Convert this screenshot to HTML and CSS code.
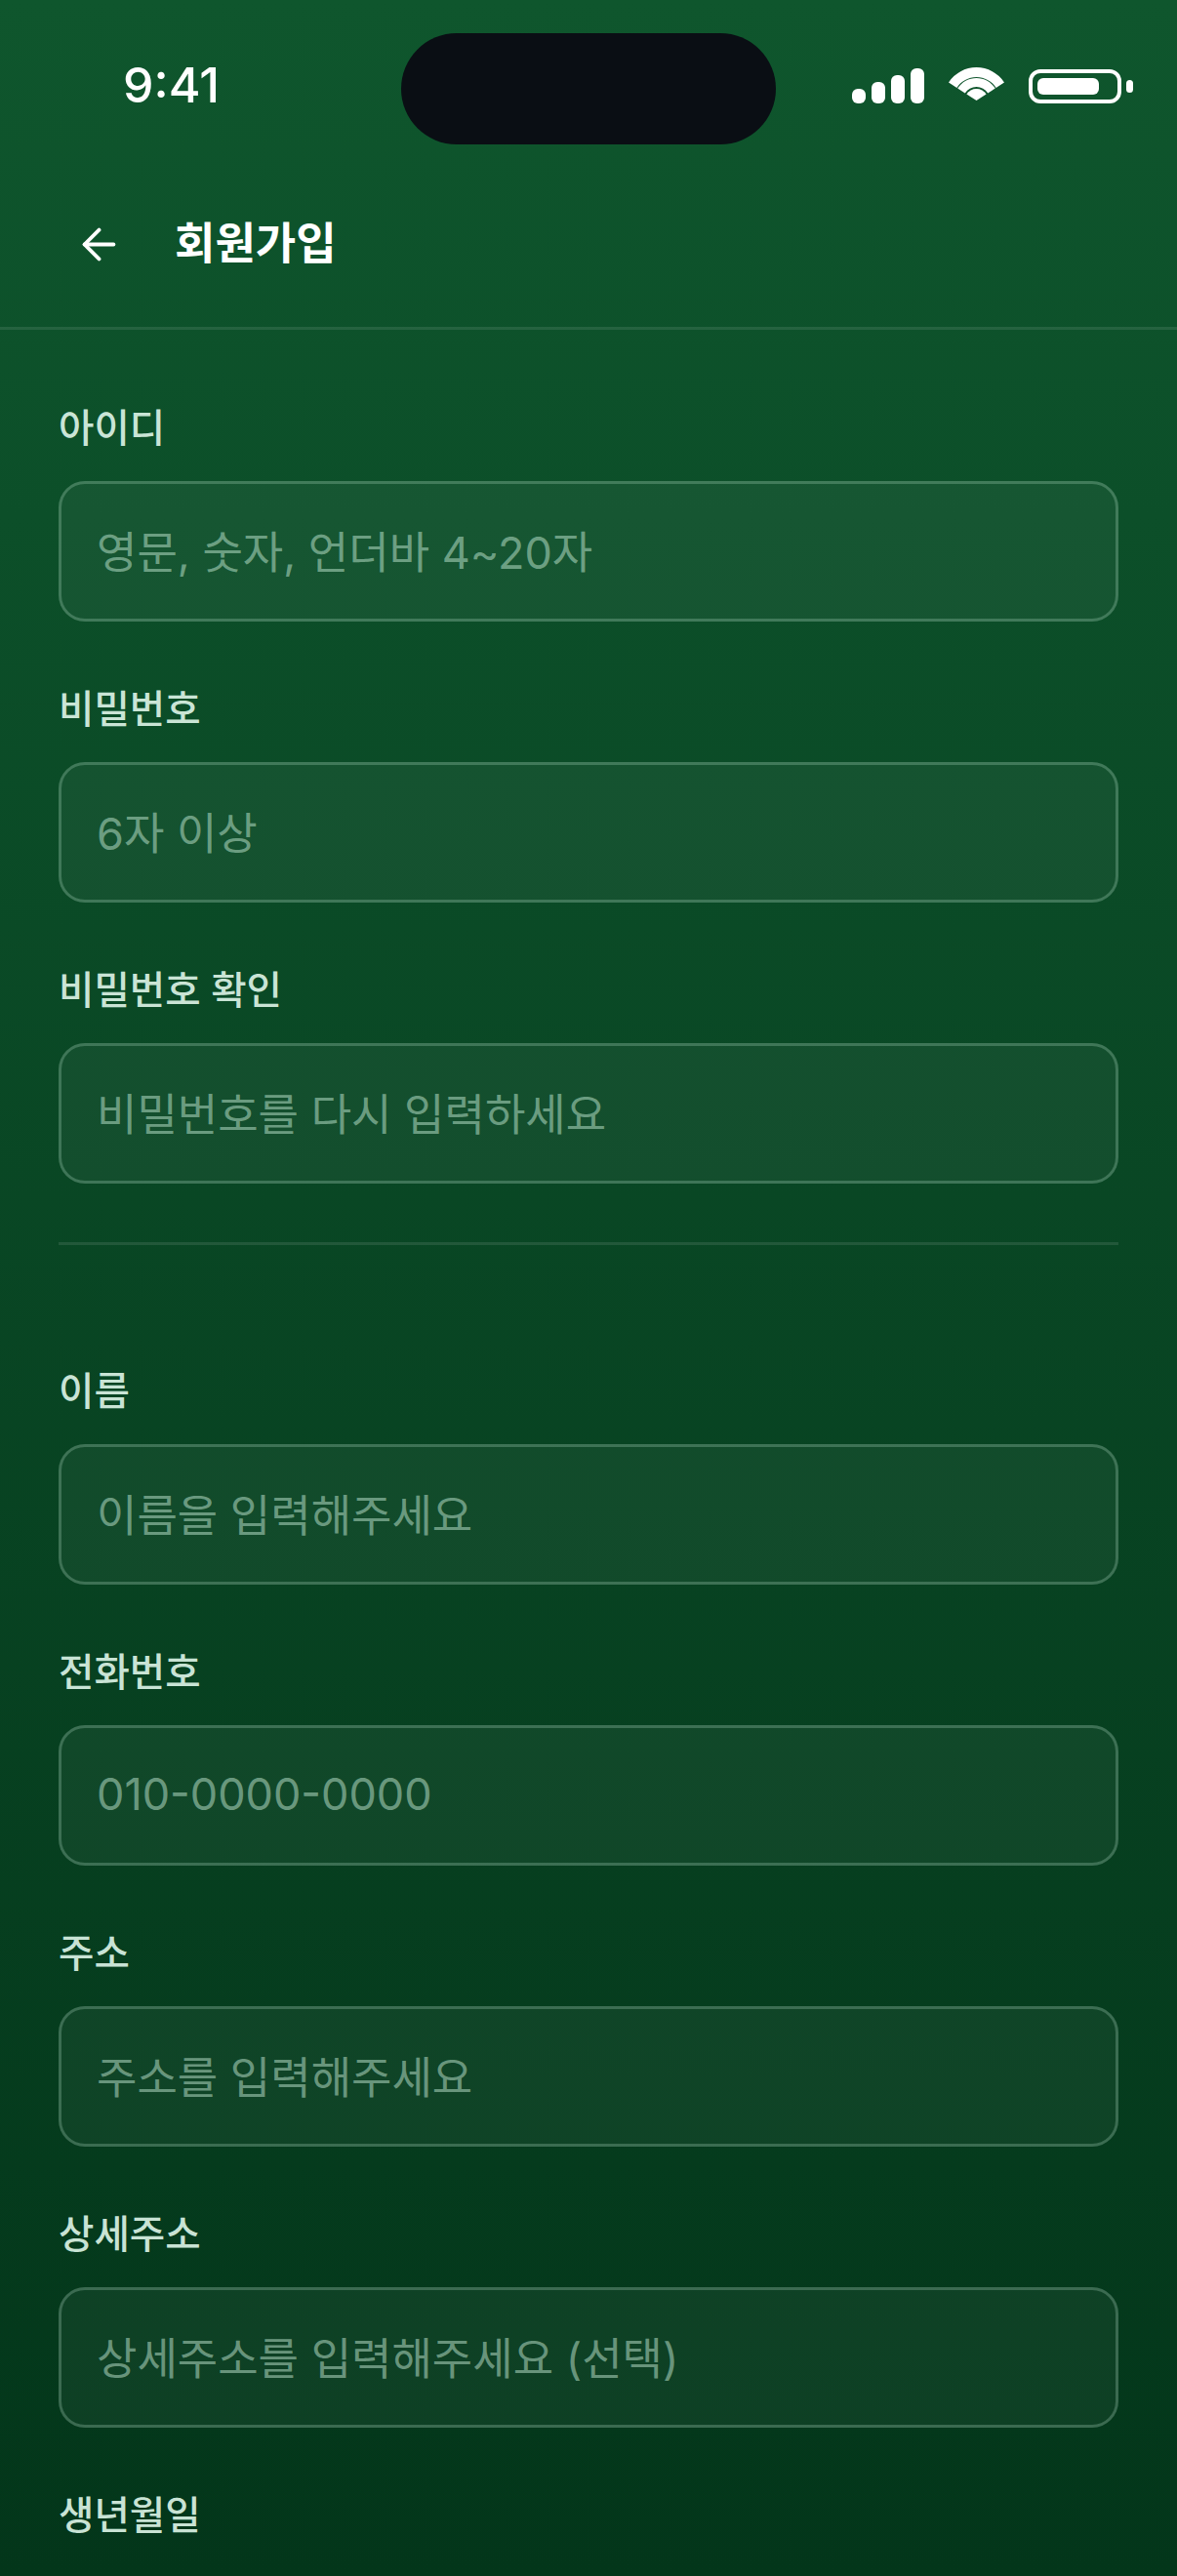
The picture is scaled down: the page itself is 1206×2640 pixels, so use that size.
FILE: index.html
```html
<!DOCTYPE html>
<html lang="ko">
<head>
<meta charset="utf-8">
<title>회원가입</title>
<link rel="stylesheet" href="styles.css">
</head>
<body>
<div class="screen">
  <div class="status">
    <span class="time">9:41</span>
    <div class="island"></div>
    <div class="status-icons">
      <svg class="signal" width="74" height="36" viewBox="0 0 74 36" fill="#fff"><rect x="0" y="21" width="14" height="15" rx="6"/><rect x="20" y="14" width="14" height="22" rx="6"/><rect x="40" y="7" width="14" height="29" rx="6"/><rect x="60" y="0" width="14" height="36" rx="6"/></svg>
      <svg class="wifi" width="57" height="34" viewBox="0 0 57 34" fill="#fff"><path d="M0 15.5A34 34 0 0 1 57 15.5L48.6 20.9A24 24 0 0 0 8.4 20.9Z"/><path d="M9.2 21.5A23 23 0 0 1 47.8 21.5L40.2 26.4A14 14 0 0 0 16.8 26.4Z"/><path d="M18.4 27.5A12 12 0 0 1 38.6 27.5L28.5 34Z"/></svg>
      <svg class="battery" width="107" height="35" viewBox="0 0 107 35" fill="#fff"><rect x="2" y="2" width="91" height="31" rx="10" fill="none" stroke="#fff" stroke-width="4"/><rect x="9" y="9" width="63" height="17" rx="6"/><rect x="100" y="11" width="7" height="13" rx="3.5"/></svg>
    </div>
  </div>
  <header class="topbar">
    <svg class="back" width="51" height="51" viewBox="0 0 24 24" fill="none" stroke="#fff" stroke-width="1.8" stroke-linecap="round" stroke-linejoin="round"><path d="m12 19-7-7 7-7"/><path d="M19 12H5"/></svg>
    <h1 class="title">회원가입</h1>
  </header>
  <main class="form">
    <section class="group">
      <div class="field"><div class="label">아이디</div><div class="input">영문, 숫자, 언더바 4~20자</div></div>
      <div class="field"><div class="label">비밀번호</div><div class="input">6자 이상</div></div>
      <div class="field"><div class="label">비밀번호 확인</div><div class="input">비밀번호를 다시 입력하세요</div></div>
    </section>
    <hr class="divider">
    <section class="group">
      <div class="field"><div class="label">이름</div><div class="input">이름을 입력해주세요</div></div>
      <div class="field"><div class="label">전화번호</div><div class="input">010-0000-0000</div></div>
      <div class="field"><div class="label">주소</div><div class="input">주소를 입력해주세요</div></div>
      <div class="field"><div class="label">상세주소</div><div class="input">상세주소를 입력해주세요 (선택)</div></div>
      <div class="field"><div class="label">생년월일</div></div>
    </section>
  </main>
</div>
</body>
</html>
```

FILE: styles.css
```css
* { box-sizing: border-box; }
html, body { margin: 0; padding: 0; }
body {
  width: 1206px;
  height: 2640px;
  overflow: hidden;
  font-family: Inter, "Noto Sans CJK KR", "Noto Sans", sans-serif;
}
.screen {
  position: relative;
  width: 1206px;
  height: 2640px;
  overflow: hidden;
  background: linear-gradient(180deg, #0f562d 0%, #0c4f29 20%, #03361a 100%);
  color: #fff;
}
.status {
  height: 165px;
  display: flex;
  align-items: flex-start;
  justify-content: space-between;
  padding: 57px 45px 0 126px;
}
.time {
  font-size: 50px;
  font-weight: 500;
  line-height: 60px;
}
.island {
  position: absolute;
  left: 411px;
  top: 34px;
  width: 384px;
  height: 114px;
  border-radius: 57px;
  background: #0a0e14;
}
.status-icons {
  display: flex;
  align-items: flex-end;
  gap: 25px;
  padding-top: 12px;
}
.signal { display: block; }
.wifi { display: block; margin-bottom: 3px; }
.battery { display: block; }
.topbar {
  height: 173px;
  display: flex;
  align-items: center;
  gap: 52px;
  padding: 0 0 0 76px;
  border-bottom: 3px solid rgba(255, 255, 255, 0.1);
}
.back { display: block; flex: none; }
.title {
  margin: 0;
  font-size: 45px;
  font-weight: 700;
  line-height: 60px;
}
.form { padding: 75px 60px 0; }
.group { display: flex; flex-direction: column; gap: 64px; }
.label {
  height: 52px;
  line-height: 53px;
  font-size: 39.6px;
  font-weight: 500;
  color: rgba(222, 245, 232, 0.92);
  margin-bottom: 28px;
}
.input {
  height: 144px;
  display: flex;
  align-items: center;
  padding: 0 36px 3px;
  border: 3px solid rgba(220, 255, 235, 0.22);
  border-radius: 27px;
  background: rgba(255, 255, 255, 0.045);
  font-size: 45px;
  font-weight: 400;
  color: rgba(220, 255, 235, 0.46);
  white-space: nowrap;
}
.divider {
  height: 3px;
  margin: 60px 0 124px;
  border: 0;
  background: rgba(255, 255, 255, 0.1);
}
```
